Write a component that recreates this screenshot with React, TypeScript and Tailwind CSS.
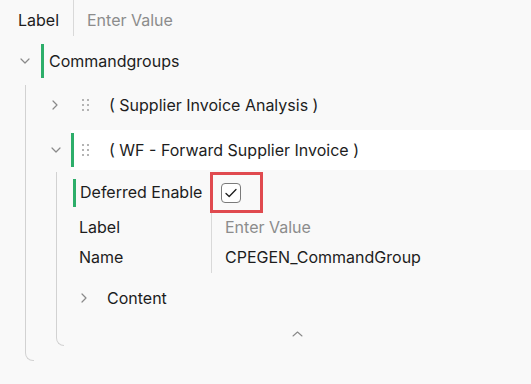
import { ReactNode } from 'react'

function ChevronDown() {
    return (
        <svg width="10" height="6" viewBox="0 0 10 6" fill="none">
            <path d="M1 1l4 4 4-4" stroke="#8a8a8a" strokeWidth="1.2" strokeLinecap="round" strokeLinejoin="round" />
        </svg>
    )
}

function ChevronRight() {
    return (
        <svg width="6" height="10" viewBox="0 0 6 10" fill="none">
            <path d="M1 1l4 4-4 4" stroke="#8a8a8a" strokeWidth="1.2" strokeLinecap="round" strokeLinejoin="round" />
        </svg>
    )
}

function DragHandle() {
    return (
        <div className="grid grid-cols-2 gap-x-[3px] gap-y-[3px] w-[7px]">
            {[0, 1, 2, 3, 4, 5].map((i) => (
                <span key={i} className="block w-[2px] h-[2px] bg-[#b4b4b4]" />
            ))}
        </div>
    )
}

function GreenBar({ className }: { className: string }) {
    return <span className={'block w-[3px] bg-[#2dae6a] ' + className} />
}

function TreeLine({ className, children }: { className: string; children: ReactNode }) {
    return (
        <div className="flex">
            <div className={'border-l border-b border-[#d2d2d2] rounded-bl-[8px] ' + className} />
            <div className="flex-1 flex flex-col">{children}</div>
        </div>
    )
}

export default function App() {
    return (
        <div className="min-h-screen bg-[#f9f9f9] font-['Inter','Noto_Sans',sans-serif] text-[16px] text-[#1d1d1d] leading-[19px]">
            <div className="flex h-[40px]">
                <div className="w-[73px] pl-[18px] flex items-center">Label</div>
                <div className="border-l border-[#d9d9d9] h-[36px]" />
                <div className="pl-[13px] flex items-center text-[#8c8c8c]">Enter Value</div>
            </div>

            <div className="flex items-center h-[34px] mt-[4px]">
                <div className="w-[41px] pl-[20px] flex items-center">
                    <ChevronDown />
                </div>
                <GreenBar className="h-[34px]" />
                <span className="ml-[5px]">Commandgroups</span>
            </div>

            <div className="mt-[7px]">
                <TreeLine className="ml-[25px] w-[9px]">
                    <div className="flex items-center h-[34px] mt-[3px]">
                        <div className="w-[37px] pl-[18px] flex items-center">
                            <ChevronRight />
                        </div>
                        <div className="ml-[11px]">
                            <DragHandle />
                        </div>
                        <span className="ml-[20px]">( Supplier Invoice Analysis )</span>
                    </div>

                    <div className="flex items-center h-[40px] mt-[8px]">
                        <div className="w-[37px] pl-[17px] flex items-center">
                            <ChevronDown />
                        </div>
                        <div className="flex-1 h-full bg-white flex items-center">
                            <GreenBar className="h-[34px]" />
                            <div className="ml-[8px]">
                                <DragHandle />
                            </div>
                            <span className="ml-[20px]">( WF - Forward Supplier Invoice )</span>
                        </div>
                    </div>

                    <div className="mt-[2px] pb-[15px]">
                        <TreeLine className="ml-[22px] w-[8px]">
                            <div className="flex h-[41px]">
                                <div className="w-[146px] flex items-center pl-[9px]">
                                    <GreenBar className="h-[28px]" />
                                    <span className="ml-[4px]">Deferred Enable</span>
                                </div>
                                <div className="w-[53px] h-[41px] border-[3px] border-[#e04a4f] pl-[8px] pt-[8px]">
                                    <div className="w-[20px] h-[20px] rounded-[4px] border border-[#7a7a7a] bg-white flex items-center justify-center">
                                        <svg width="14" height="12" viewBox="0 0 14 12" fill="none">
                                            <path d="M2 6.5l3.2 3L12 2.5" stroke="#1d1d1d" strokeWidth="1.3" strokeLinecap="round" strokeLinejoin="round" />
                                        </svg>
                                    </div>
                                </div>
                            </div>

                            <div className="flex h-[29px]">
                                <div className="w-[147px] pl-[15px] flex items-center">Label</div>
                                <div className="border-l border-[#d9d9d9] pl-[13px] flex items-center text-[#8c8c8c]">Enter Value</div>
                            </div>
                            <div className="flex h-[31px]">
                                <div className="w-[147px] pl-[15px] flex items-center">Name</div>
                                <div className="border-l border-[#d9d9d9] pl-[13px] flex items-center">CPEGEN_CommandGroup</div>
                            </div>

                            <div className="flex items-center h-[30px] mt-[10px]">
                                <div className="w-[43px] pl-[17px] flex items-center">
                                    <ChevronRight />
                                </div>
                                <span>Content</span>
                            </div>

                            <div className="h-[33px] flex justify-center pt-[18px]">
                                <svg width="11" height="6" viewBox="0 0 11 6" fill="none">
                                    <path d="M1 5l4.5-4 4.5 4" stroke="#8a8a8a" strokeWidth="1.1" strokeLinecap="round" strokeLinejoin="round" />
                                </svg>
                            </div>
                        </TreeLine>
                    </div>
                </TreeLine>
            </div>
        </div>
    )
}
